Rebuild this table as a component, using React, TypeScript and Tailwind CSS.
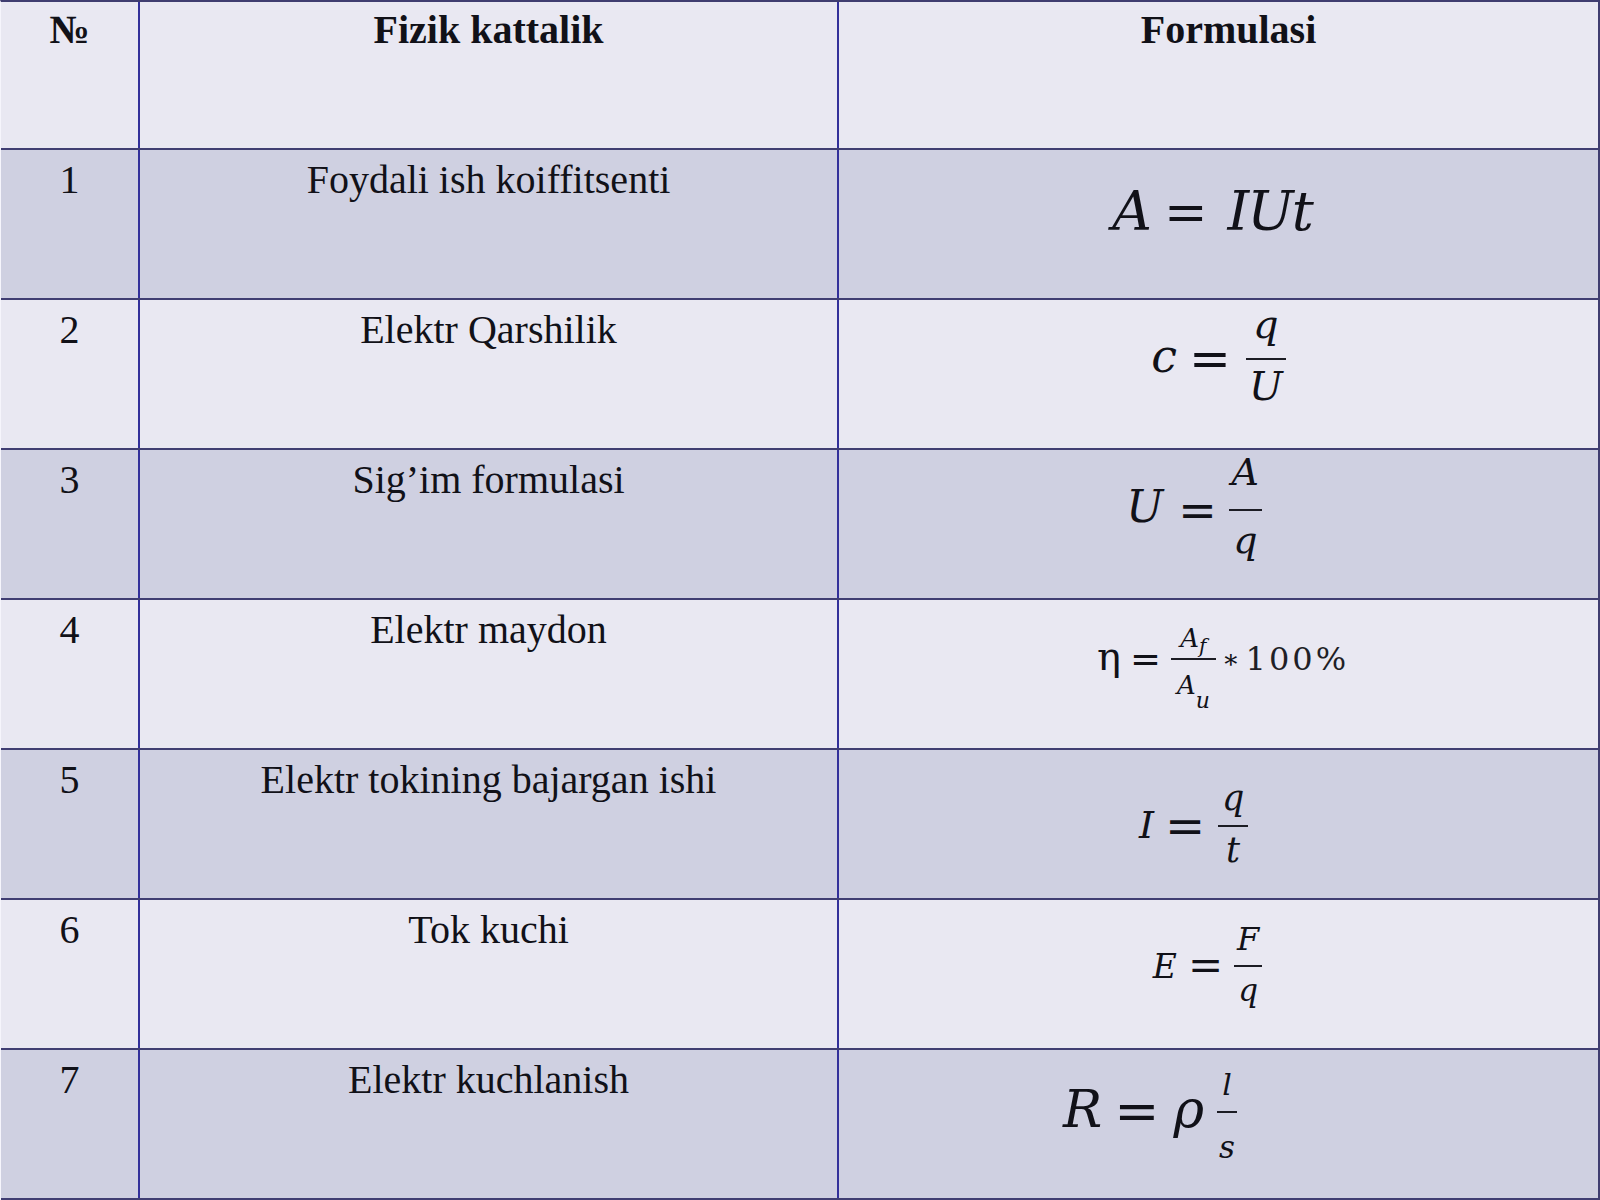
const serif = "font-['Liberation_Serif',serif]";
const mathI = "font-['DejaVu_Serif',serif] italic";
const dv = "font-['DejaVu_Serif',serif]";

type Row = { n: string; name: string; formula: React.ReactNode; cell: string };

function Bar({ className }: { className: string }) {
  return <span className={`block h-[2px] bg-[#1c1c24] ${className}`} />;
}

const rows: Row[] = [
  {
    n: "1",
    name: "Foydali ish koiffitsenti",
    cell: "pb-[25px] pr-[13px]",
    formula: (
      <div className="flex items-center leading-none">
        <span className={`${mathI} text-[55px]`}>A</span>
        <span className={`${dv} ml-[12px] mr-[20px] text-[52px]`}>=</span>
        <span className={`${mathI} text-[55px] tracking-[-2px]`}>IUt</span>
      </div>
    ),
  },
  {
    n: "2",
    name: "Elektr Qarshilik",
    cell: "pb-[30px]",
    formula: (
      <div className="flex items-center leading-none">
        <span className={`${mathI} -translate-y-[3px] text-[46px]`}>c</span>
        <span className={`${dv} ml-[12px] mr-[15px] text-[50px]`}>=</span>
        <span className="flex flex-col items-center">
          <span className={`${mathI} flex h-[58px] items-end pb-[14px] text-[40px]`}>q</span>
          <Bar className="w-[40px]" />
          <span className={`${mathI} flex h-[58px] items-start pt-[6px] text-[40px]`}>U</span>
        </span>
      </div>
    ),
  },
  {
    n: "3",
    name: "Sig’im formulasi",
    cell: "pb-[28px] pr-[49px]",
    formula: (
      <div className="flex items-center leading-none">
        <span className={`${mathI} -translate-y-[3px] text-[44px]`}>U</span>
        <span className={`${dv} ml-[15px] mr-[12px] text-[46px]`}>=</span>
        <span className="flex flex-col items-center">
          <span className={`${mathI} flex h-[62px] items-end pb-[18px] text-[38px]`}>A</span>
          <Bar className="w-[33px]" />
          <span className={`${mathI} flex h-[62px] items-start pt-[10px] text-[38px]`}>q</span>
        </span>
      </div>
    ),
  },
  {
    n: "4",
    name: "Elektr maydon",
    cell: "pb-[30px] pl-[9px]",
    formula: (
      <div className="flex items-center leading-none">
        <span className={`${dv} -translate-y-[3px] text-[40px]`}>η</span>
        <span className={`${dv} ml-[9px] mr-[10px] text-[37px]`}>=</span>
        <span className="flex flex-col items-center">
          <span className="flex h-[42px] items-end pb-[7px]">
            <span className={`${mathI} text-[26px]`}>A</span>
            <span className={`${mathI} translate-y-[5px] text-[20px]`}>f</span>
          </span>
          <Bar className="w-[45px]" />
          <span className="flex h-[42px] items-start pt-[12px]">
            <span className={`${mathI} text-[26px]`}>A</span>
            <span className={`${mathI} translate-y-[10px] self-end text-[22px]`}>u</span>
          </span>
        </span>
        <span className={`${dv} mx-[6px] text-[26px]`}>∗</span>
        <span className={`${dv} text-[32px] tracking-[3px] text-[#1f1f26]`}>100%</span>
      </div>
    ),
  },
  {
    n: "5",
    name: "Elektr tokining bajargan ishi",
    cell: "pt-[4px] pr-[50px]",
    formula: (
      <div className="flex items-center leading-none">
        <span className={`${mathI} -translate-y-[1px] text-[38px]`}>I</span>
        <span className={`${dv} ml-[11px] mr-[13px] text-[48px]`}>=</span>
        <span className="flex flex-col items-center">
          <span className={`${mathI} flex h-[46px] items-end pb-[9px] text-[35px]`}>q</span>
          <Bar className="w-[30px]" />
          <span className={`${mathI} flex h-[46px] items-start pt-[6px] text-[35px]`}>t</span>
        </span>
      </div>
    ),
  },
  {
    n: "6",
    name: "Tok kuchi",
    cell: "pb-[16px] pr-[22px]",
    formula: (
      <div className="flex items-center leading-none">
        <span className={`${mathI} text-[33px]`}>E</span>
        <span className={`${dv} ml-[11px] mr-[11px] text-[42px]`}>=</span>
        <span className="flex flex-col items-center">
          <span className={`${mathI} flex h-[45px] items-end pb-[10px] text-[32px]`}>F</span>
          <Bar className="w-[28px]" />
          <span className={`${mathI} flex h-[45px] items-start pt-[8px] text-[31px]`}>q</span>
        </span>
      </div>
    ),
  },
  {
    n: "7",
    name: "Elektr kuchlanish",
    cell: "pb-[24px] pr-[137px]",
    formula: (
      <div className="flex items-center leading-none">
        <span className={`${mathI} -translate-y-[3px] text-[52px]`}>R</span>
        <span className={`${dv} ml-[12px] mr-[14px] text-[54px]`}>=</span>
        <span className={`${mathI} -translate-y-[3px] text-[52px]`}>ρ</span>
        <span className="ml-[13px] flex flex-col items-center">
          <span className={`${mathI} flex h-[52px] items-end pb-[11px] text-[30px]`}>l</span>
          <Bar className="w-[20px]" />
          <span className={`${mathI} flex h-[52px] items-start pt-[19px] text-[31px]`}>s</span>
        </span>
      </div>
    ),
  },
];

export default function App() {
  return (
    <div className={`${serif} h-[1200px] w-[1600px] overflow-hidden border-l border-t-2 border-r-2 border-l-[#f6f5fc] border-t-[#3f3d70] border-r-[#3f3d70] text-[40px] leading-[40px] text-[#111118]`}>
      <div className="flex h-[148px] border-b-2 border-[#403e72] bg-[#e9e8f2] font-bold">
        <div className="w-[139px] shrink-0 border-r-2 border-[#33309a] pt-[8px] text-center">№</div>
        <div className="w-[699px] shrink-0 border-r-2 border-[#33309a] pt-[8px] text-center">Fizik kattalik</div>
        <div className="flex-1 pl-[20px] pt-[8px] text-center">Formulasi</div>
      </div>
      {rows.map((r, i) => (
        <div
          key={r.n}
          className={`flex h-[150px] border-b-2 border-[#403e72] ${i % 2 === 0 ? "bg-[#cfd0e1]" : "bg-[#e9e8f2]"}`}
        >
          <div className="w-[139px] shrink-0 border-r-2 border-[#33309a] pt-[10px] text-center">{r.n}</div>
          <div className="w-[699px] shrink-0 border-r-2 border-[#33309a] pt-[10px] text-center">{r.name}</div>
          <div className={`flex flex-1 items-center justify-center ${r.cell}`}>{r.formula}</div>
        </div>
      ))}
    </div>
  );
}
